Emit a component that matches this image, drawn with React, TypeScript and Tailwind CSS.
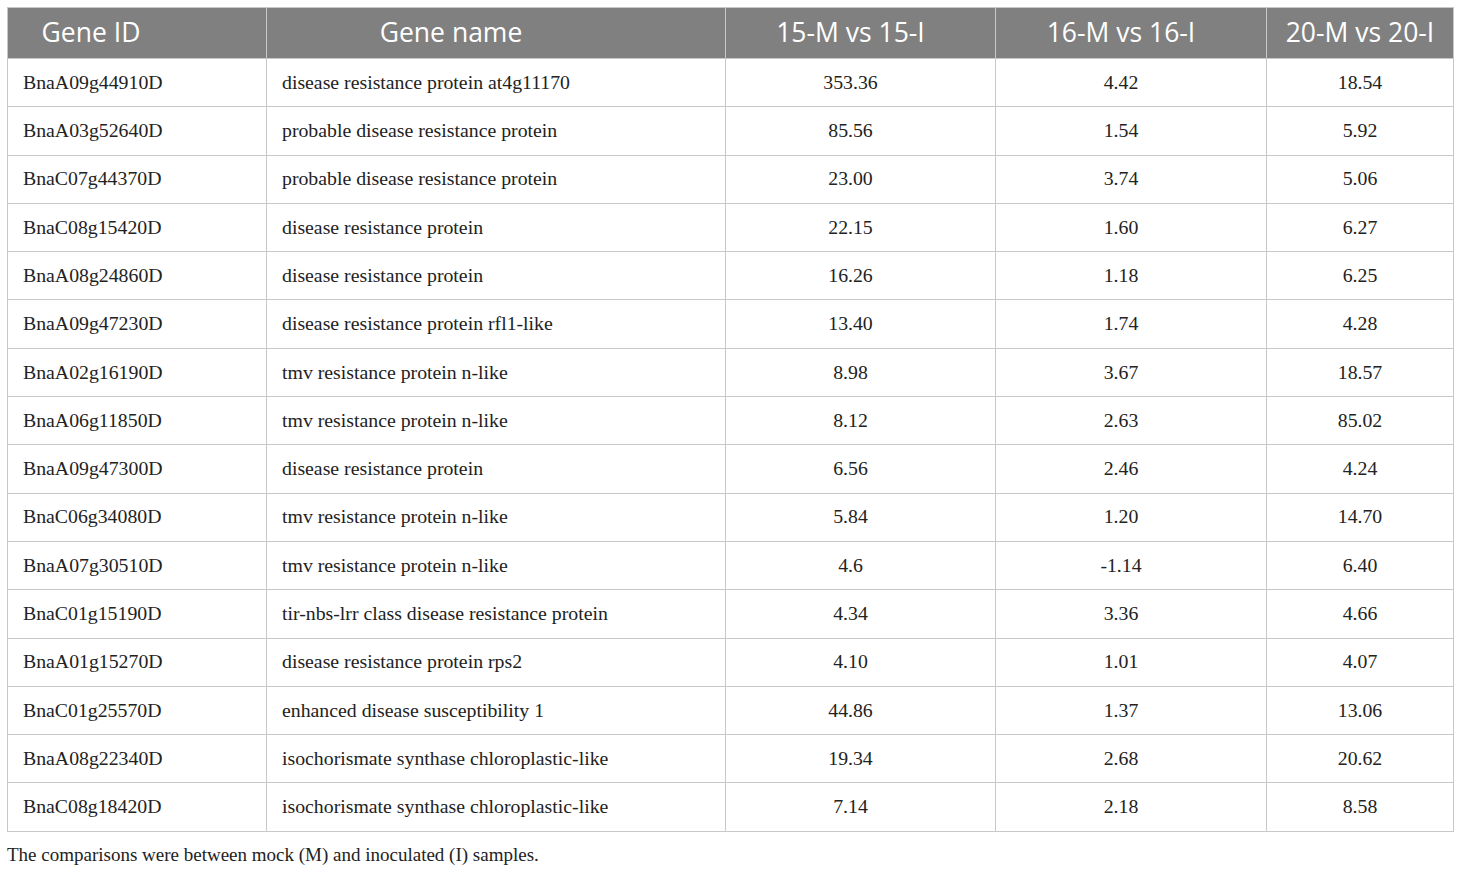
const ROWS: [string, string, string, string, string][] = [
  ['BnaA09g44910D', 'disease resistance protein at4g11170', '353.36', '4.42', '18.54'],
  ['BnaA03g52640D', 'probable disease resistance protein', '85.56', '1.54', '5.92'],
  ['BnaC07g44370D', 'probable disease resistance protein', '23.00', '3.74', '5.06'],
  ['BnaC08g15420D', 'disease resistance protein', '22.15', '1.60', '6.27'],
  ['BnaA08g24860D', 'disease resistance protein', '16.26', '1.18', '6.25'],
  ['BnaA09g47230D', 'disease resistance protein rfl1-like', '13.40', '1.74', '4.28'],
  ['BnaA02g16190D', 'tmv resistance protein n-like', '8.98', '3.67', '18.57'],
  ['BnaA06g11850D', 'tmv resistance protein n-like', '8.12', '2.63', '85.02'],
  ['BnaA09g47300D', 'disease resistance protein', '6.56', '2.46', '4.24'],
  ['BnaC06g34080D', 'tmv resistance protein n-like', '5.84', '1.20', '14.70'],
  ['BnaA07g30510D', 'tmv resistance protein n-like', '4.6', '-1.14', '6.40'],
  ['BnaC01g15190D', 'tir-nbs-lrr class disease resistance protein', '4.34', '3.36', '4.66'],
  ['BnaA01g15270D', 'disease resistance protein rps2', '4.10', '1.01', '4.07'],
  ['BnaC01g25570D', 'enhanced disease susceptibility 1', '44.86', '1.37', '13.06'],
  ['BnaA08g22340D', 'isochorismate synthase chloroplastic-like', '19.34', '2.68', '20.62'],
  ['BnaC08g18420D', 'isochorismate synthase chloroplastic-like', '7.14', '2.18', '8.58'],
];

const th = "h-[51px] border border-[#c8c8c8] font-['Open_Sans',sans-serif] text-[26.5px] font-normal text-white text-center";
const td = "h-[48.3px] border border-[#c8c8c8] px-[15px] py-0";

export default function App() {
  return (
    <div className="min-h-screen bg-white px-[7px] pt-[7px] font-['Liberation_Serif',serif] text-[#222]">
      <table className="w-[1446px] table-fixed border-collapse">
        <colgroup>
          <col className="w-[259px]" />
          <col className="w-[459px]" />
          <col className="w-[270px]" />
          <col className="w-[271px]" />
          <col className="w-[187px]" />
        </colgroup>
        <thead>
          <tr className="bg-[#808080]">
            <th className={`${th} pr-[92px]`}>Gene ID</th>
            <th className={`${th} pr-[90px]`}>Gene name</th>
            <th className={`${th} pr-[20px]`}>15-M vs 15-I</th>
            <th className={`${th} pr-[20px]`}>16-M vs 16-I</th>
            <th className={th}>20-M vs 20-I</th>
          </tr>
        </thead>
        <tbody className="text-[19.8px]">
          {ROWS.map((r) => (
            <tr key={r[0]}>
              <td className={`${td} text-left`}>{r[0]}</td>
              <td className={`${td} text-left`}>{r[1]}</td>
              <td className={`${td} text-center pr-[35px]`}>{r[2]}</td>
              <td className={`${td} text-center pr-[35px]`}>{r[3]}</td>
              <td className={`${td} text-center`}>{r[4]}</td>
            </tr>
          ))}
        </tbody>
      </table>
      <p className="mt-[9px] text-[19px] leading-[28px] text-[#222]">
        The comparisons were between mock (M) and inoculated (I) samples.
      </p>
    </div>
  );
}
